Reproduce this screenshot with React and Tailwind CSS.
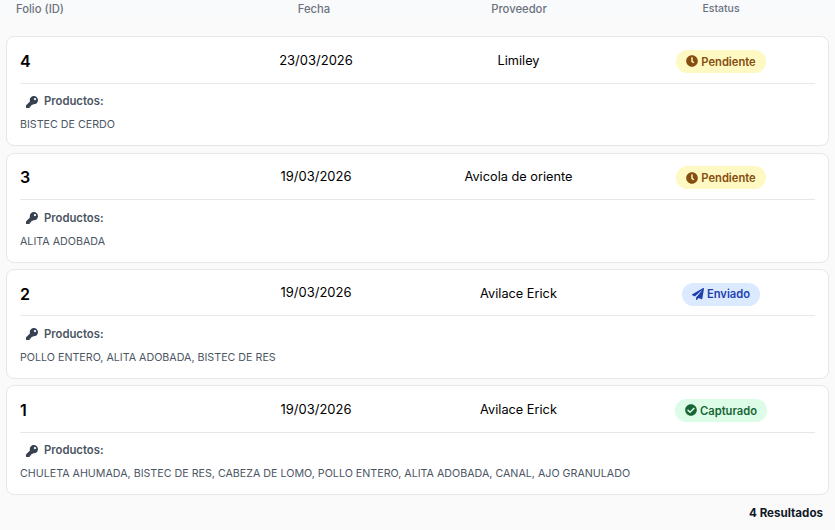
import { FaKey, FaClock, FaPaperPlane, FaCheckCircle } from "react-icons/fa";

const badges = {
  Pendiente: { cls: "bg-[#fef9c3] text-[#854d0e] w-[90px]", Icon: FaClock },
  Enviado: { cls: "bg-[#dbeafe] text-[#1e40af] w-[78px]", Icon: FaPaperPlane },
  Capturado: { cls: "bg-[#dcfce7] text-[#166534] w-[92px]", Icon: FaCheckCircle },
};

const rows = [
  { id: 4, date: "23/03/2026", prov: "Limiley", status: "Pendiente", items: "BISTEC DE CERDO" },
  { id: 3, date: "19/03/2026", prov: "Avicola de oriente", status: "Pendiente", items: "ALITA ADOBADA" },
  { id: 2, date: "19/03/2026", prov: "Avilace Erick", status: "Enviado", items: "POLLO ENTERO, ALITA ADOBADA, BISTEC DE RES" },
  { id: 1, date: "19/03/2026", prov: "Avilace Erick", status: "Capturado", items: "CHULETA AHUMADA, BISTEC DE RES, CABEZA DE LOMO, POLLO ENTERO, ALITA ADOBADA, CANAL, AJO GRANULADO" },
];

function Badge({ status }) {
  const { cls, Icon } = badges[status];
  return (
    <span className={`inline-flex h-[23px] items-center justify-center gap-[3px] rounded-full text-[11.2px] font-semibold ${cls}`}>
      <Icon className="text-[12px]" />
      <span className="pt-[1px]">{status}</span>
    </span>
  );
}

export default function App() {
  return (
    <div className="h-[530px] w-[835px] overflow-hidden bg-[#fafafa] font-['Inter',sans-serif] text-black">
      <div className="grid h-[18px] grid-cols-[198px_203px_204px_1fr] items-center bg-[#f9fafb] pr-[6px] pl-[16px] text-[11.25px] font-medium text-[#6b7280]">
        <div>Folio (ID)</div>
        <div className="pr-[3px] text-center">Fecha</div>
        <div className="text-center">Proveedor</div>
        <div className="pr-[8px] text-center text-[10.5px]">Estatus</div>
      </div>
      <div className="flex flex-col gap-[6.33px] px-[6px] pt-[18.3px]">
        {rows.map((r) => (
          <div key={r.id} className="h-[110px] rounded-lg border border-[#e5e7eb] bg-white px-[13px]">
            <div className="grid h-[46.4px] grid-cols-[195px_203px_204px_1fr] items-center border-b border-[#e5e7eb]">
              <div className="pt-[2px] text-base font-semibold">{r.id}</div>
              <div className="pt-[1px] pr-[1px] text-center text-[13px]">{r.date}</div>
              <div className="pt-[1px] pr-[3px] text-center text-[12.75px]">{r.prov}</div>
              <div className="flex justify-center pt-[3px] pl-[5px]"><Badge status={r.status} /></div>
            </div>
            <div className="flex items-center gap-[6px] pt-[9.6px] pl-[6px] text-[11.3px] font-semibold text-[#4b5563]">
              <FaKey className="text-[12px] text-[#374151]" />
              Productos:
            </div>
            <div className="pt-[7px] text-[10.7px] text-[#4b5563]">{r.items}</div>
          </div>
        ))}
      </div>
      <div className="pt-[10px] pr-[12px] text-right text-[11.6px] font-bold text-[#111827]">4 Resultados</div>
    </div>
  );
}
